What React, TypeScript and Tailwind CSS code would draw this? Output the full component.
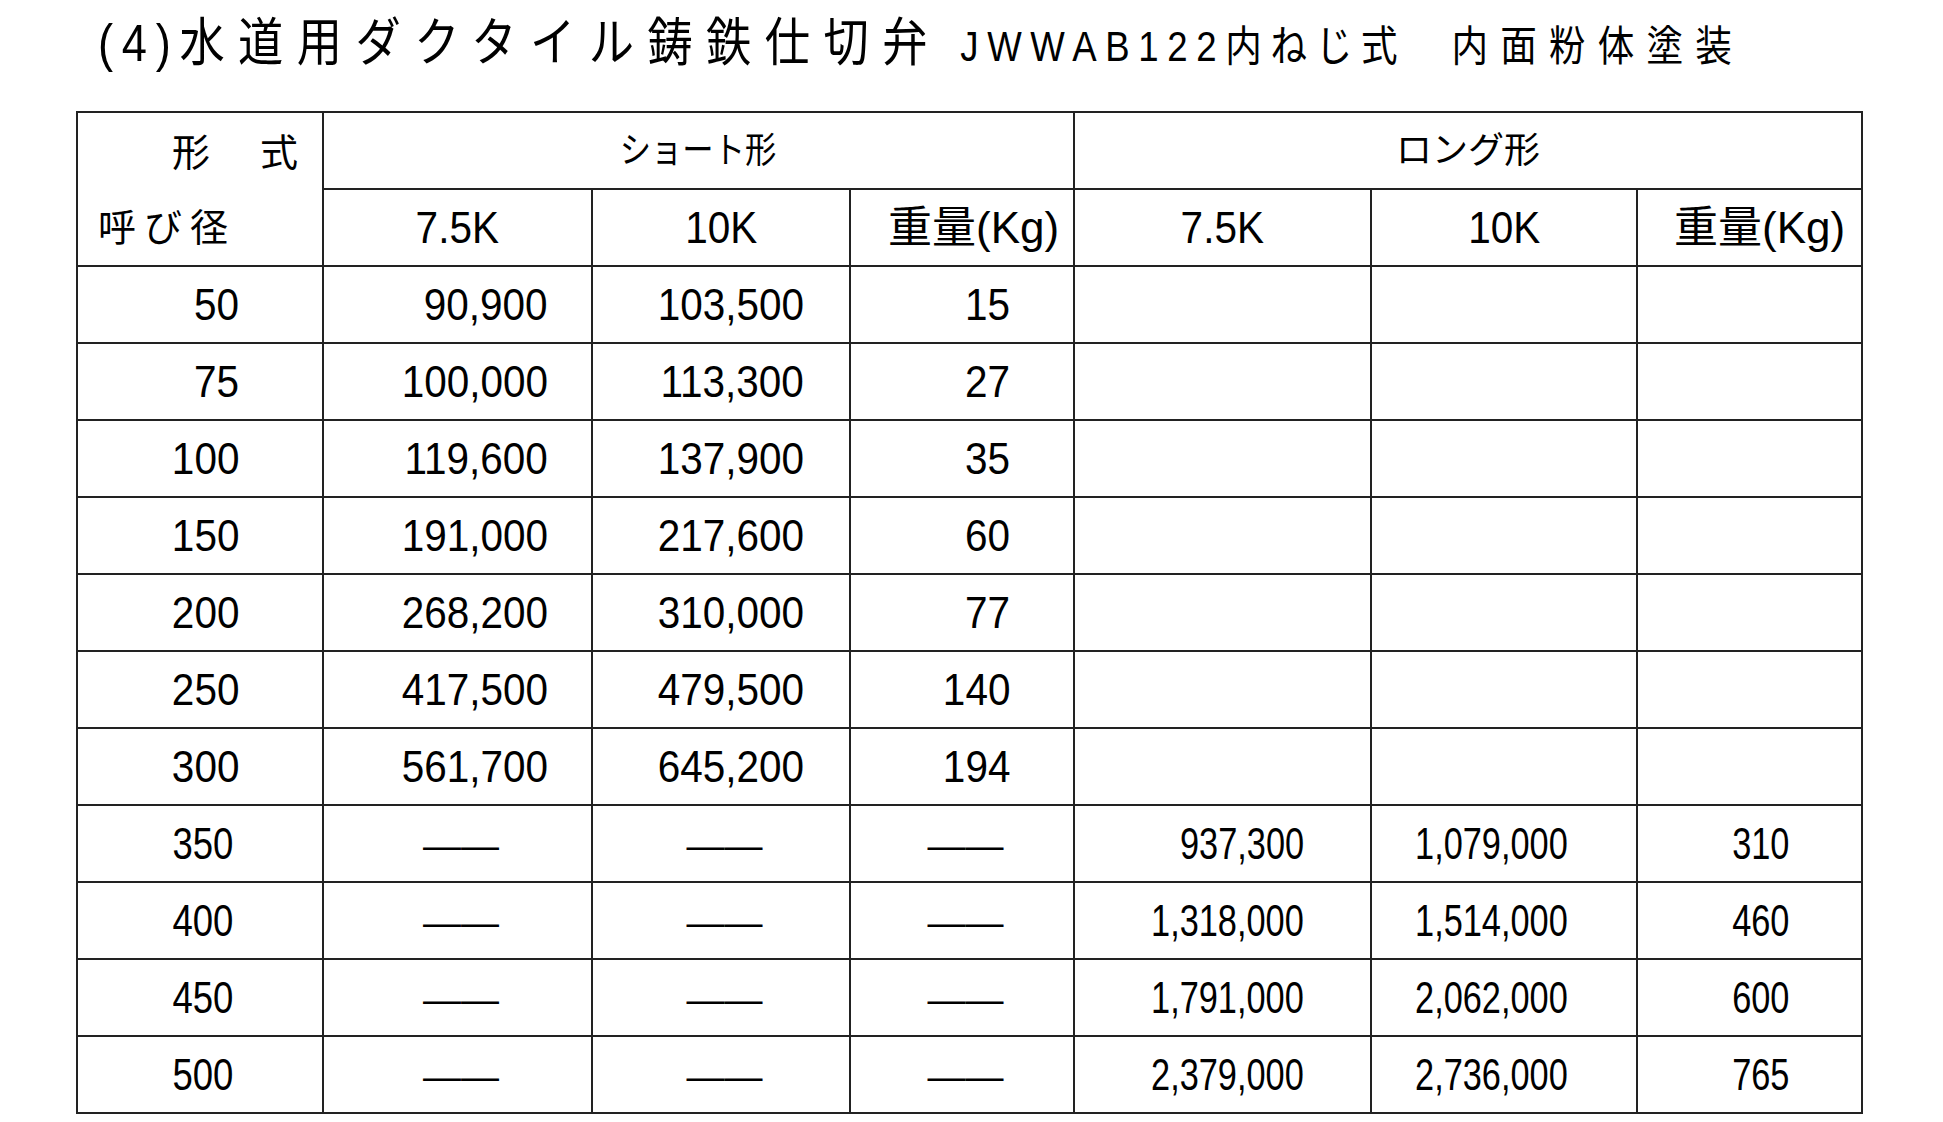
import React from 'react'

type Row = {
  size: string
  short?: [string, string, string]
  long?: [string, string, string]
}

const rows: Row[] = [
  { size: '50', short: ['90,900', '103,500', '15'] },
  { size: '75', short: ['100,000', '113,300', '27'] },
  { size: '100', short: ['119,600', '137,900', '35'] },
  { size: '150', short: ['191,000', '217,600', '60'] },
  { size: '200', short: ['268,200', '310,000', '77'] },
  { size: '250', short: ['417,500', '479,500', '140'] },
  { size: '300', short: ['561,700', '645,200', '194'] },
  { size: '350', long: ['937,300', '1,079,000', '310'] },
  { size: '400', long: ['1,318,000', '1,514,000', '460'] },
  { size: '450', long: ['1,791,000', '2,062,000', '600'] },
  { size: '500', long: ['2,379,000', '2,736,000', '765'] },
]

const cell = 'border-2 border-[#222] p-0 align-middle whitespace-nowrap'

const Dash = () => (
  <td className={`${cell} pl-[7px] text-center`}>
    <span className="text-[38px]">——</span>
  </td>
)

const App = () => {
  return (
    <div
      className="min-h-screen w-[1943px] bg-white text-black"
      style={{ fontFamily: '"Liberation Sans", "Noto Sans CJK JP", sans-serif' }}
    >
      <div className="h-[111px] pl-[98px] pt-[17px]">
        {/* title is drawn narrow, like the printed catalogue */}
        <div className="inline-block origin-left scale-x-[0.87] whitespace-nowrap text-[52px] leading-[52px]">
          <span className="tracking-[10px]">(4)</span>
          <span className="tracking-[15.5px]">水道用ダクタイル鋳鉄仕切弁</span>
          <span className="ml-[22px] text-[42px] tracking-[10px]">JWWAB122内ねじ式</span>
          <span className="ml-[52px] text-[42px] tracking-[14px]">内面粉体塗装</span>
        </div>
      </div>

      <table className="ml-[76px] w-[1785px] table-fixed border-collapse text-[44px] leading-none">
        <colgroup>
          <col className="w-[246px]" />
          <col className="w-[269px]" />
          <col className="w-[258px]" />
          <col className="w-[224px]" />
          <col className="w-[297px]" />
          <col className="w-[266px]" />
          <col className="w-[225px]" />
        </colgroup>
        <tbody>
          <tr className="h-[77px]">
            <td rowSpan={2} className={cell}>
              <div className="flex h-[150px] flex-col text-[38px]">
                <div className="flex h-[78px] items-center justify-end pr-[24px]">
                  <span>形</span>
                  <span className="ml-[50px]">式</span>
                </div>
                <div className="flex h-[72px] items-center pl-[20px] tracking-[8px]">呼び径</div>
              </div>
            </td>
            <td colSpan={3} className={`${cell} text-center text-[36px]`}>
              <span className="inline-block scale-x-[0.87]">ショート形</span>
            </td>
            <td colSpan={3} className={`${cell} text-center text-[36px]`}>
              <span className="inline-block">ロング形</span>
            </td>
          </tr>
          <tr className="h-[77px]">
            <td className={`${cell} text-center`}>
              <span className="inline-block scale-x-[0.92]">7.5K</span>
            </td>
            <td className={`${cell} text-center`}>
              <span className="inline-block scale-x-[0.92]">10K</span>
            </td>
            <td className={`${cell} pl-[37px] text-left`}>重量(Kg)</td>
            <td className={`${cell} text-center`}>
              <span className="inline-block scale-x-[0.92]">7.5K</span>
            </td>
            <td className={`${cell} text-center`}>
              <span className="inline-block scale-x-[0.92]">10K</span>
            </td>
            <td className={`${cell} pl-[36px] text-left`}>重量(Kg)</td>
          </tr>

          {rows.map((r) => (
            <tr key={r.size} className="h-[77px]">
              {r.long ? (
                <td className={`${cell} pr-[89px] text-right`}>
                  <span className="inline-block origin-right scale-x-[0.83]">{r.size}</span>
                </td>
              ) : (
                <td className={`${cell} pr-[83px] text-right`}>
                  <span className="inline-block origin-right scale-x-[0.92]">{r.size}</span>
                </td>
              )}

              {r.short ? (
                <>
                  <td className={`${cell} pr-[43px] text-right`}>
                    <span className="inline-block origin-right scale-x-[0.92]">{r.short[0]}</span>
                  </td>
                  <td className={`${cell} pr-[45px] text-right`}>
                    <span className="inline-block origin-right scale-x-[0.92]">{r.short[1]}</span>
                  </td>
                  <td className={`${cell} pr-[63px] text-right`}>
                    <span className="inline-block origin-right scale-x-[0.92]">{r.short[2]}</span>
                  </td>
                </>
              ) : (
                <>
                  <Dash />
                  <Dash />
                  <Dash />
                </>
              )}

              {r.long ? (
                <>
                  <td className={`${cell} pr-[66px] text-right`}>
                    <span className="inline-block origin-right scale-x-[0.78]">{r.long[0]}</span>
                  </td>
                  <td className={`${cell} pr-[69px] text-right`}>
                    <span className="inline-block origin-right scale-x-[0.78]">{r.long[1]}</span>
                  </td>
                  <td className={`${cell} pr-[72px] text-right`}>
                    <span className="inline-block origin-right scale-x-[0.78]">{r.long[2]}</span>
                  </td>
                </>
              ) : (
                <>
                  <td className={cell}></td>
                  <td className={cell}></td>
                  <td className={cell}></td>
                </>
              )}
            </tr>
          ))}
        </tbody>
      </table>
    </div>
  )
}

export default App
